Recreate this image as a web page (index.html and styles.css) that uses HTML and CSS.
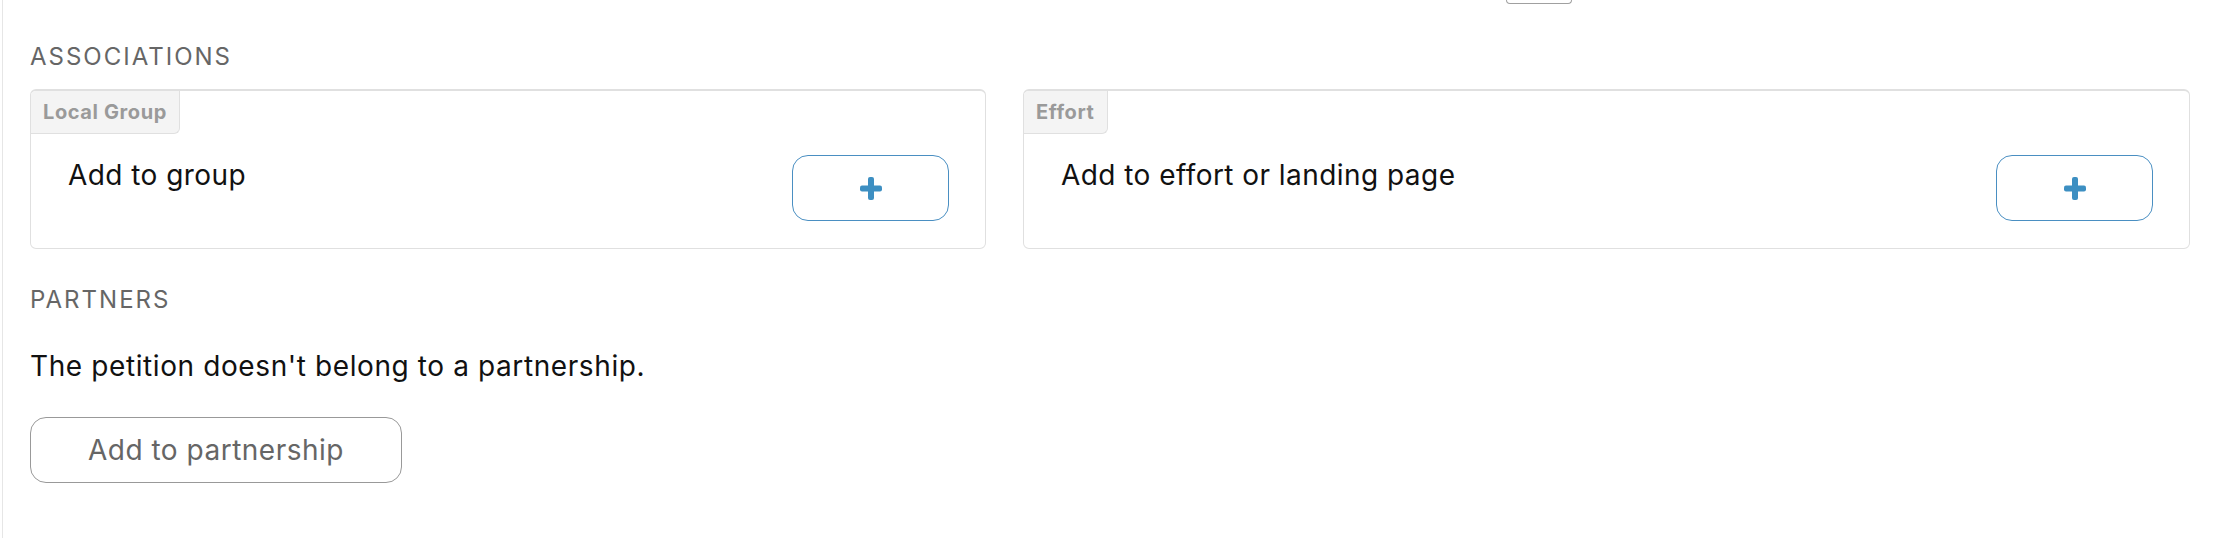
FILE: index.html
```html
<!DOCTYPE html>
<html lang="en">
<head>
<meta charset="utf-8">
<title>Associations</title>
<link rel="stylesheet" href="styles.css">
</head>
<body>
<div class="page">
  <div class="top-row"><div class="top-stub"></div></div>

  <h2 class="section-title">ASSOCIATIONS</h2>
  <div class="assoc-grid">
    <div class="card card-group">
      <div class="tab">Local Group</div>
      <div class="card-body">
        <div class="card-text">Add to group</div>
        <button class="plus-btn" type="button" aria-label="Add">
          <svg width="22" height="23" viewBox="0 0 22 23"><rect x="8" y="0" width="6" height="23" rx="2"/><rect x="0" y="8.5" width="22" height="6" rx="2"/></svg>
        </button>
      </div>
    </div>
    <div class="card card-effort">
      <div class="tab">Effort</div>
      <div class="card-body">
        <div class="card-text">Add to effort or landing page</div>
        <button class="plus-btn" type="button" aria-label="Add">
          <svg width="22" height="23" viewBox="0 0 22 23"><rect x="8" y="0" width="6" height="23" rx="2"/><rect x="0" y="8.5" width="22" height="6" rx="2"/></svg>
        </button>
      </div>
    </div>
  </div>

  <h2 class="section-title partners-title">PARTNERS</h2>
  <p class="partners-text">The petition doesn't belong to a partnership.</p>
  <button class="outline-btn" type="button">Add to partnership</button>
</div>
</body>
</html>
```

FILE: styles.css
```css
html, body {
  margin: 0;
  padding: 0;
  background: #ffffff;
}

body {
  font-family: Inter, "Liberation Sans", sans-serif;
  color: #111111;
}

.page {
  margin-left: 2px;
  border-left: 1px solid #e6e6e6;
  min-height: 538px;
  box-sizing: border-box;
  padding: 0 28px 0 27px;
}

.top-row {
  height: 4px;
}

.top-stub {
  margin-left: 1476px;
  width: 64px;
  height: 3px;
  border: 1px solid #a0a0a0;
  border-top: none;
  border-radius: 0 0 6px 6px;
}

.section-title {
  margin: 39px 0 0 0;
  font-size: 24px;
  line-height: 28px;
  font-weight: 400;
  letter-spacing: 2px;
  color: #666666;
}

.assoc-grid {
  display: grid;
  grid-template-columns: 956fr 1167fr;
  gap: 37px;
  margin-top: 18px;
}

.card {
  border: 1px solid #e0e0e0;
  border-top-width: 2px;
  border-radius: 6px;
  overflow: hidden;
}

.tab {
  display: inline-block;
  background: #f4f4f4;
  border-right: 1px solid #e0e0e0;
  border-bottom: 1px solid #e0e0e0;
  border-radius: 0 0 6px 0;
  padding: 0 12px;
  height: 42px;
  line-height: 42px;
  font-size: 20px;
  font-weight: 700;
  letter-spacing: 0.6px;
  color: #9a9a9a;
  vertical-align: top;
}

.card-body {
  display: flex;
  justify-content: space-between;
  align-items: flex-start;
  padding: 21px 36px 27px 37px;
}

.card-text {
  font-size: 28px;
  line-height: 34px;
  letter-spacing: 0.45px;
  margin-top: 3px;
  color: #111111;
}

.plus-btn {
  width: 157px;
  height: 66px;
  border: 1.5px solid #4a8fc2;
  border-radius: 16px;
  background: #ffffff;
  display: flex;
  align-items: center;
  justify-content: center;
  padding: 0;
  cursor: pointer;
}

.plus-btn svg {
  fill: #3d8fc2;
}

.partners-title {
  margin-top: 37px;
}

.partners-text {
  margin: 35px 0 0 0;
  font-size: 28px;
  line-height: 34px;
  letter-spacing: 0.6px;
  color: #111111;
}

.outline-btn {
  margin-top: 34px;
  width: 372px;
  height: 66px;
  border: 1px solid #999999;
  border-radius: 16px;
  background: #ffffff;
  font-family: Inter, "Liberation Sans", sans-serif;
  font-size: 28px;
  letter-spacing: 0.5px;
  color: #666666;
  padding: 0;
  cursor: pointer;
}
```
